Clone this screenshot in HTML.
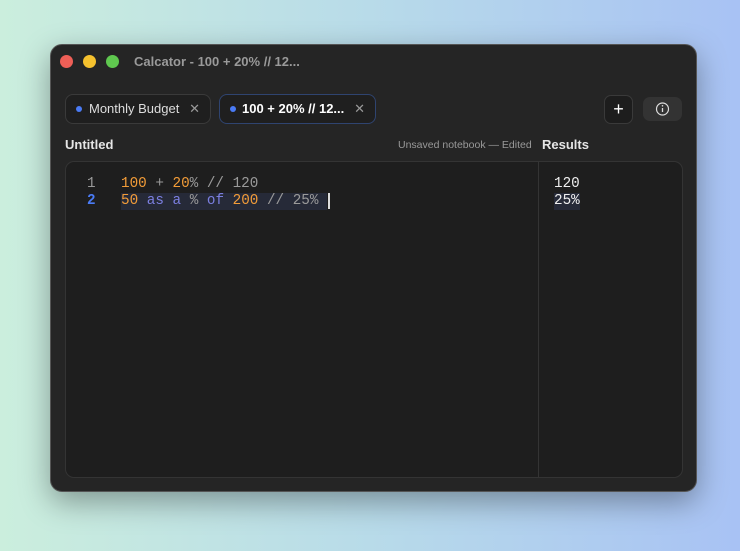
<!DOCTYPE html>
<html><head><style>
*{margin:0;padding:0;box-sizing:border-box}
body{width:740px;height:551px;overflow:hidden;background:linear-gradient(90deg,#cbeedd 0%,#b8dbe9 50%,#a8c2f4 100%);font-family:"Liberation Sans",sans-serif;position:relative}
.win{position:absolute;left:50px;top:44px;width:647px;height:448px;background:#252525;border-radius:12px;border:1px solid #555;box-shadow:0 10px 30px rgba(0,0,0,.35)}
.dot{position:absolute;top:10px;width:13px;height:13px;border-radius:50%}
.title{position:absolute;left:83px;top:9px;color:#9a9a9a;font-weight:bold;font-size:13px}
.tab{position:absolute;top:49px;height:30px;border-radius:8px;border:1px solid #3a3a3a;background:#1f1f1f;color:#ddd;font-size:13px;line-height:28px}
.tab .b{position:absolute;left:10px;top:11px;width:6px;height:6px;border-radius:50%;background:#4a7bf5}
.tab .x{position:absolute;right:10px;top:0;color:#999;font-size:13px}
.btn{position:absolute;top:50px;height:29px;border-radius:7px}
.lbl{position:absolute;font-weight:bold;color:#e6e6e6;font-size:13px}
.ed{position:absolute;left:14px;top:116px;width:618px;height:317px;background:#1e1e1e;border:1px solid #343434;border-radius:9px}
.div{position:absolute;left:472px;top:0;width:1px;height:100%;background:#343434}
.mono{font-family:"Liberation Mono",monospace;font-size:14.3px;line-height:17px;position:absolute;white-space:pre}
.o{color:#f29c38}.g{color:#9a9a9a}.p{color:#7b7fe0}
</style></head><body>
<div class="win">
<div class="dot" style="left:9px;background:#ee5f57"></div>
<div class="dot" style="left:32px;background:#f5c12e"></div>
<div class="dot" style="left:55px;background:#5fc84f"></div>
<div class="title">Calcator - 100 + 20% // 12...</div>
<div class="tab" style="left:14px;width:146px"><span class="b"></span><span style="position:absolute;left:23px">Monthly Budget</span><span class="x">✕</span></div>
<div class="tab" style="left:168px;width:157px;border-color:#2f4470;color:#fff;font-weight:bold"><span class="b"></span><span style="position:absolute;left:22px">100 + 20% // 12...</span><span class="x" style="font-weight:normal">✕</span></div>
<div class="btn" style="left:553px;width:29px;background:#1d1d1d;border:1px solid #3a3a3a;color:#fff;text-align:center;font-size:18px;line-height:26px">+</div>
<div class="btn" style="left:592px;width:39px;background:#333;top:52px;height:24px"><svg width="39" height="24"><circle cx="19.5" cy="12" r="6" fill="none" stroke="#ddd" stroke-width="1.2"/><line x1="19.5" y1="11" x2="19.5" y2="15" stroke="#ddd" stroke-width="1.3"/><circle cx="19.5" cy="8.8" r=".8" fill="#ddd"/></svg></div>
<div class="lbl" style="left:14px;top:92px">Untitled</div>
<div style="position:absolute;left:347px;top:94px;color:#999;font-size:10.5px">Unsaved notebook — Edited</div>
<div class="lbl" style="left:491px;top:92px">Results</div>
<div class="ed">
<div class="div"></div>
<div class="mono" style="left:21px;top:14px;color:#999">1</div>
<div class="mono" style="left:21px;top:31px;color:#4a7bf5;font-weight:bold">2</div>
<div class="mono" style="left:55px;top:14px"><span class="o">100</span><span class="g"> + </span><span class="o">20</span><span class="g">% // 120</span></div>
<div style="position:absolute;left:55px;top:31px;width:206px;height:17px;background:#262a38"></div>
<div class="mono" style="left:55px;top:31px"><span class="o">50</span> <span class="p">as a</span> <span class="g">%</span> <span class="p">of</span> <span class="o">200</span><span class="g"> // 25%</span></div>
<div style="position:absolute;left:262px;top:31px;width:2px;height:16px;background:#ddd"></div>
<div class="mono" style="left:488px;top:14px;color:#eee">120</div>
<div style="position:absolute;left:488px;top:31px;width:26px;height:17px;background:#262a38"></div>
<div class="mono" style="left:488px;top:31px;color:#eee">25%</div>
</div>
</div>
</body></html>
